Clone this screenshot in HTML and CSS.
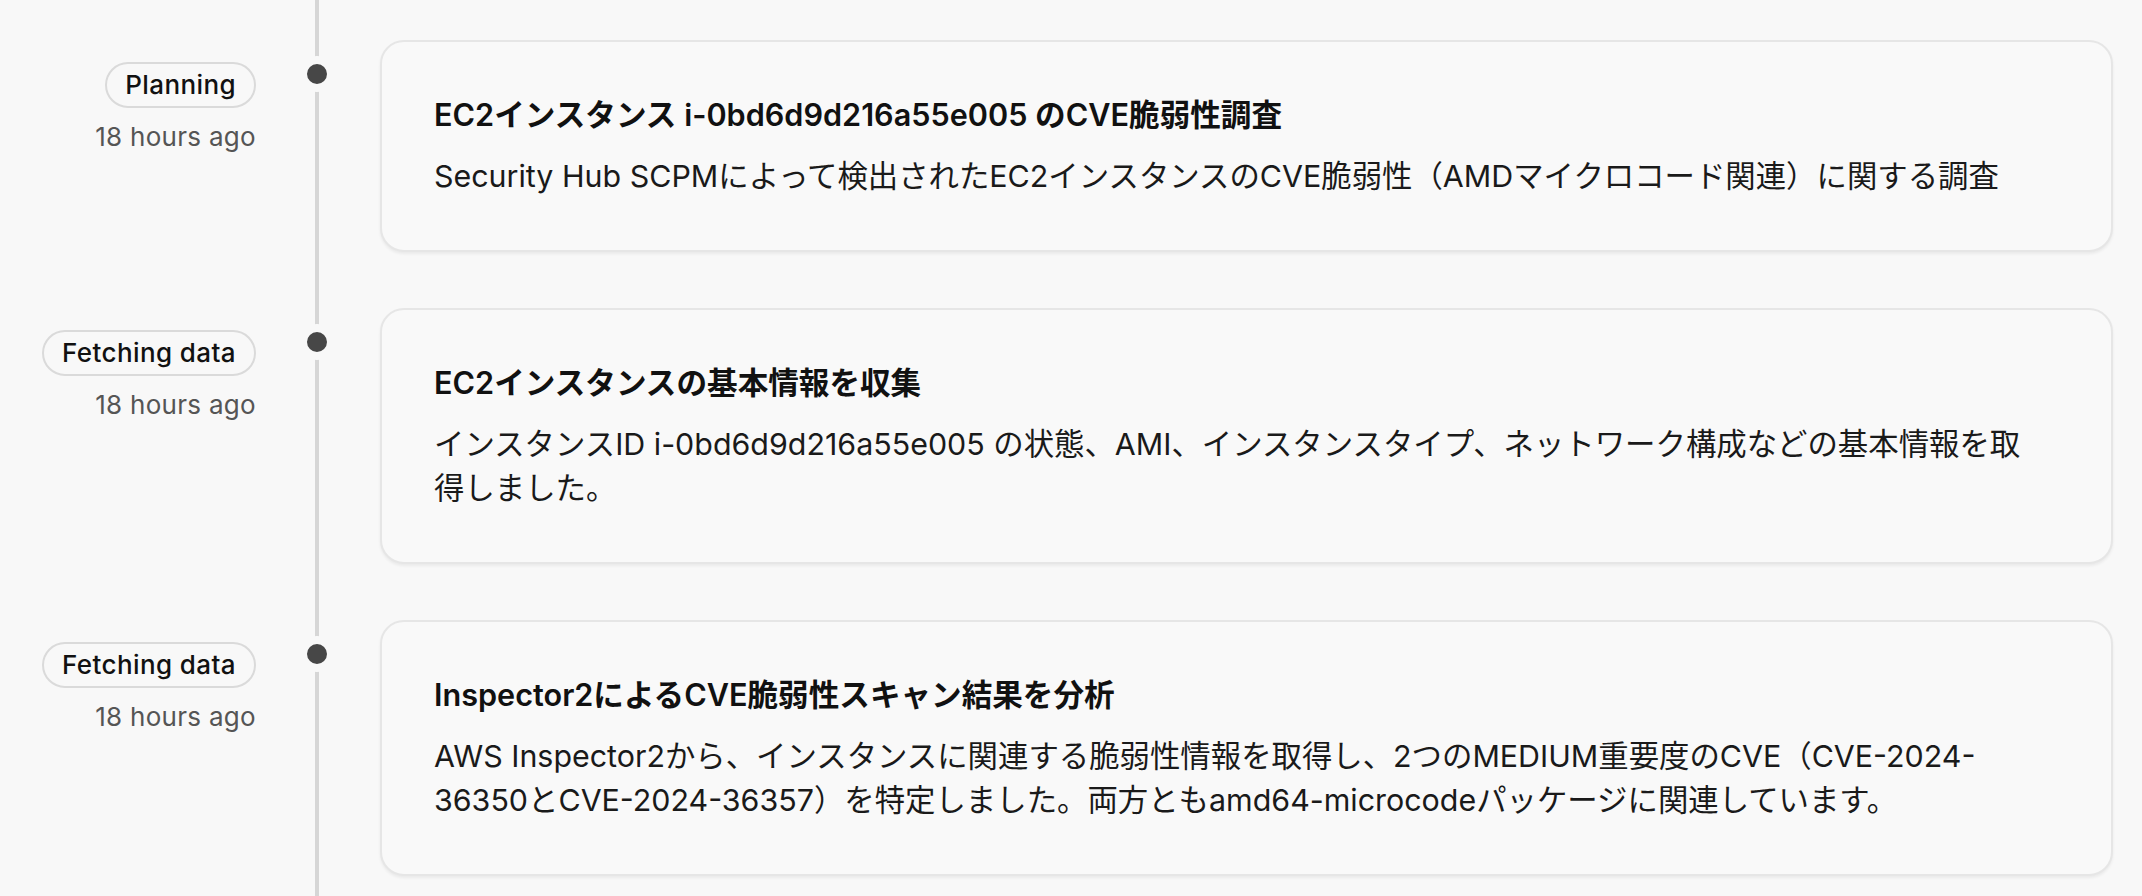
FILE: index.html
```html
<!DOCTYPE html>
<html lang="ja">
  <head>
    <meta charset="utf-8">
    <title>Investigation timeline</title>
    <link rel="stylesheet" href="styles.css">
  </head>
  <body>
    <div class="timeline">
      <div class="entry">
        <div class="meta">
          <span class="status">Planning</span>
          <div class="time">18 hours ago</div>
        </div>
        <div class="rail"><span class="dot"></span></div>
        <div class="card">
          <h3 class="card-title">EC2インスタンス i-0bd6d9d216a55e005 のCVE脆弱性調査</h3>
          <p class="card-text">Security Hub SCPMによって検出されたEC2インスタンスのCVE脆弱性（AMDマイクロコード関連）に関する調査</p>
        </div>
      </div>

      <div class="entry">
        <div class="meta">
          <span class="status">Fetching data</span>
          <div class="time">18 hours ago</div>
        </div>
        <div class="rail"><span class="dot"></span></div>
        <div class="card">
          <h3 class="card-title">EC2インスタンスの基本情報を収集</h3>
          <p class="card-text">インスタンスID i-0bd6d9d216a55e005 の状態、AMI、インスタンスタイプ、ネットワーク構成などの基本情報を取得しました。</p>
        </div>
      </div>

      <div class="entry">
        <div class="meta">
          <span class="status">Fetching data</span>
          <div class="time">18 hours ago</div>
        </div>
        <div class="rail"><span class="dot"></span></div>
        <div class="card">
          <h3 class="card-title">Inspector2によるCVE脆弱性スキャン結果を分析</h3>
          <p class="card-text">AWS Inspector2から、インスタンスに関連する脆弱性情報を取得し、2つのMEDIUM重要度のCVE（CVE-2024-&#8203;36350とCVE-2024-36357）を特定しました。両方ともamd64-microcodeパッケージに関連しています。</p>
        </div>
      </div>
    </div>
  </body>
</html>
```

FILE: styles.css
```css
body {
  margin: 0;
  background-color: #f8f8f8;
  font-family: Inter, "Noto Sans CJK JP", sans-serif;
  color: #111;
}

/* vertical rail line runs behind the dots */
.timeline {
  box-sizing: border-box;
  min-height: 100vh;
  padding: 40px 29px 40px 0;
  background: linear-gradient(#d6d6d6, #d6d6d6) no-repeat 315px 0 / 4px 100%;
}

.entry {
  display: grid;
  grid-template-columns: 256px 124px 1fr;
  margin-bottom: 56px;
}

.meta {
  display: flex;
  flex-direction: column;
  align-items: flex-end;
  padding-top: 22px;
}

.status {
  border: 2px solid #dadada;
  border-radius: 999px;
  padding: 0 18px;
  font-size: 26px;
  line-height: 42px;
  letter-spacing: 0.4px;
  font-weight: 500;
  color: #111;
}

.time {
  margin-top: 11px;
  font-size: 26px;
  line-height: 36px;
  letter-spacing: 0.3px;
  color: #555;
}

.rail {
  padding: 16px 0 0 43px;
}

.dot {
  display: block;
  width: 20px;
  height: 20px;
  border-radius: 50%;
  background-color: #474747;
  border: 8px solid #f8f8f8;
}

.card {
  background-color: #f9f9f9;
  border: 2px solid #e6e6e6;
  border-radius: 24px;
  padding: 51px 70px 52px 52px;
  box-shadow: 0 2px 3px rgba(0, 0, 0, 0.06);
}

.card-title {
  margin: 0 0 17px;
  font-size: 30.6px;
  line-height: 44px;
  font-weight: 600;
  color: #111;
}

.card-text {
  margin: 0;
  font-size: 30.4px;
  line-height: 44px;
  color: #1a1a1a;
}
```
